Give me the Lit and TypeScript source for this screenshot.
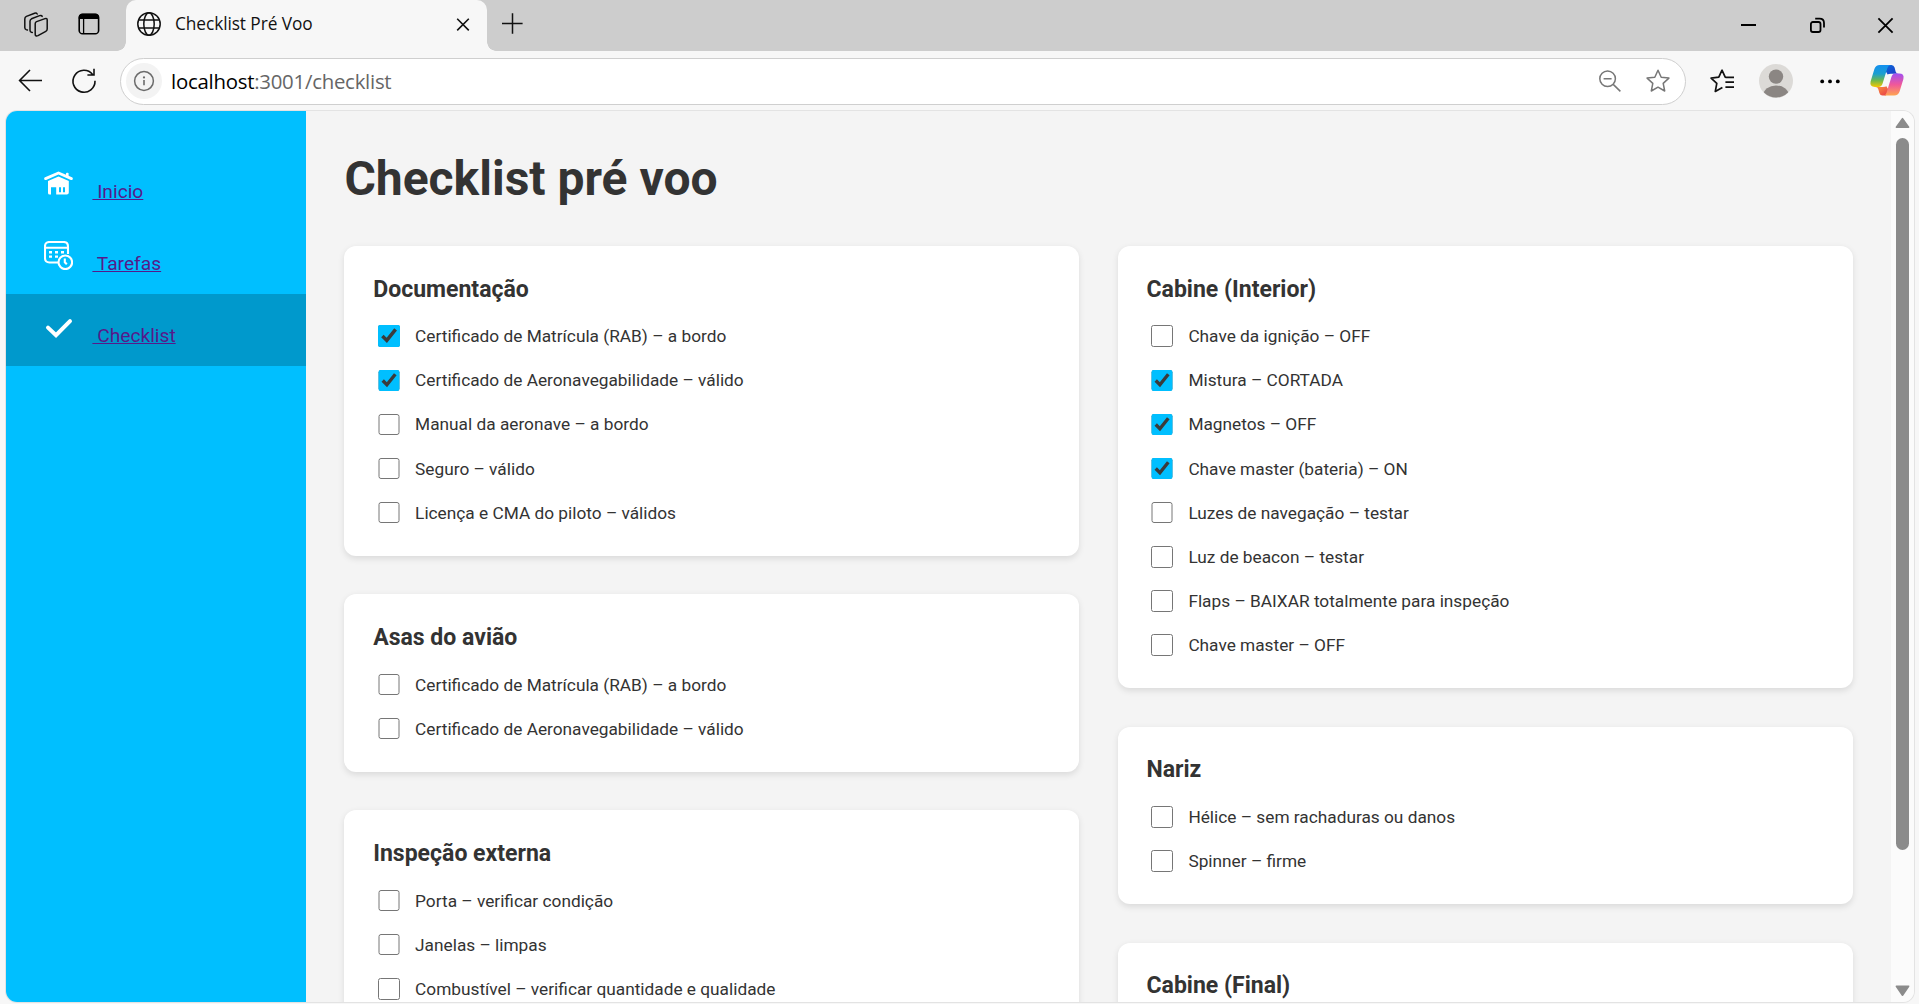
import { LitElement, html, css, svg } from "lit";
import { customElement, property } from "lit/decorators.js";

interface Item {
  label: string;
  done?: boolean;
}
interface Section {
  title: string;
  items: Item[];
}

const LEFT: Section[] = [
  {
    title: "Documentação",
    items: [
      { label: "Certificado de Matrícula (RAB) – a bordo", done: true },
      { label: "Certificado de Aeronavegabilidade – válido", done: true },
      { label: "Manual da aeronave – a bordo" },
      { label: "Seguro – válido" },
      { label: "Licença e CMA do piloto – válidos" },
    ],
  },
  {
    title: "Asas do avião",
    items: [
      { label: "Certificado de Matrícula (RAB) – a bordo" },
      { label: "Certificado de Aeronavegabilidade – válido" },
    ],
  },
  {
    title: "Inspeção externa",
    items: [
      { label: "Porta – verificar condição" },
      { label: "Janelas – limpas" },
      { label: "Combustível – verificar quantidade e qualidade" },
    ],
  },
];

const RIGHT: Section[] = [
  {
    title: "Cabine (Interior)",
    items: [
      { label: "Chave da ignição – OFF" },
      { label: "Mistura – CORTADA", done: true },
      { label: "Magnetos – OFF", done: true },
      { label: "Chave master (bateria) – ON", done: true },
      { label: "Luzes de navegação – testar" },
      { label: "Luz de beacon – testar" },
      { label: "Flaps – BAIXAR totalmente para inspeção" },
      { label: "Chave master – OFF" },
    ],
  },
  {
    title: "Nariz",
    items: [{ label: "Hélice – sem rachaduras ou danos" }, { label: "Spinner – firme" }],
  },
  { title: "Cabine (Final)", items: [] },
];

@customElement("check-card")
export class CheckCard extends LitElement {
  @property({ attribute: false }) section!: Section;

  static styles = css`
    :host {
      display: block;
      background: #fff;
      border-radius: 12px;
      padding: 28.8px 28.8px 28.4px;
      box-shadow: 0 2.4px 6px rgba(0, 0, 0, 0.1);
    }
    .title {
      margin: 0;
      height: 46.59px;
      box-sizing: border-box;
      padding-top: 1px;
      font-size: 23.04px;
      font-weight: 700;
      line-height: 28px;
    }
    .list {
      display: flex;
      flex-direction: column;
      gap: 14.4px;
    }
    .row {
      display: flex;
      align-items: center;
      height: 29.72px;
      font-size: 17.28px;
    }
    .box {
      width: 21.6px;
      height: 21.6px;
      margin: 0 15.5px 0 4.8px;
      accent-color: #00bfff;
    }
  `;

  render() {
    return html`
      <h2 class="title">${this.section.title}</h2>
      <div class="list">
        ${this.section.items.map(
          (i) => html`<label class="row"
            ><input class="box" type="checkbox" .checked=${!!i.done} /><span>${i.label}</span></label
          >`
        )}
      </div>
    `;
  }
}

@customElement("side-nav")
export class SideNav extends LitElement {
  static styles = css`
    :host {
      display: flex;
      flex-direction: column;
      flex: 0 0 300px;
      padding-top: 39px;
      background: #00bfff;
      box-sizing: border-box;
    }
    .item {
      display: flex;
      height: 72px;
      box-sizing: border-box;
      padding: 19px 0 0 38px;
    }
    .active {
      background: #0099cc;
    }
    .icon {
      flex: none;
      width: 29px;
      height: 29px;
    }
    .link {
      margin: 9px 0 0 19.4px;
      font-size: 19.2px;
      line-height: 28px;
      color: #551a8b;
      text-decoration: underline;
      white-space: pre;
    }
  `;

  render() {
    return html`
      <div class="item">
        <svg class="icon" viewBox="0 0 29 29">
          <path d="M1.6 9.6 14.5 4 27.4 9.6" fill="none" stroke="#fff" stroke-width="2.8" stroke-linecap="round" stroke-linejoin="round"/>
          <rect x="22" y="3.8" width="2.6" height="4.5" rx="1" fill="#fff"/>
          <path fill-rule="evenodd" fill="#fff" d="M4 12 14.5 7.4 24.8 12V23.5Q24.8 25.6 22.8 25.6H12.2V18.2H7V25.6H5.6Q4 25.6 4 24ZM15 18.2V23.2H17V18.2ZM19 18.2V23.2H21V18.2Z"/>
        </svg>
        <a class="link" href="#"> Inicio</a>
      </div>
      <div class="item">
        <svg class="icon" viewBox="0 0 29 29" fill="none" stroke="#fff" stroke-width="2.1">
          <path d="M14 21.5H5.5Q1 21.5 1 17V5.5Q1 1 5.5 1H19.5Q24 1 24 5.5V13"/>
          <path d="M1 6.8H24"/>
          <path d="M5 11.2H8M11 11.2H14M17 11.2H20M5 15.6H8M11 15.6H14" stroke-width="2.4"/>
          <circle cx="21.3" cy="21.3" r="6.8"/>
          <path d="M20.8 17.5V21.2L22.8 23.2"/>
        </svg>
        <a class="link" href="#"> Tarefas</a>
      </div>
      <div class="item active">
        <svg class="icon" viewBox="0 0 29 29" fill="none" stroke="#fff" stroke-width="4" stroke-linecap="round">
          <path d="M4 14.6 12 22.1 26 8.1" stroke-linejoin="miter"/>
        </svg>
        <a class="link" href="#"> Checklist</a>
      </div>
    `;
  }
}

const star = "M12 1.2 15.2 8.2 22.9 9.1 17.2 14.4 18.7 22 12 18.2 5.3 22 6.8 14.4 1.1 9.1 8.8 8.2Z";
const globe = svg`<g fill="none" stroke="#111" stroke-width="1.5"><circle cx="12" cy="12" r="11.2"/><ellipse cx="12" cy="12" rx="5.2" ry="11.2"/><path d="M2 8H22M2 16H22"/></g>`;

@customElement("app-root")
export class AppRoot extends LitElement {
  static styles = css`
    :host {
      display: flex;
      flex-direction: column;
      width: 1919px;
      height: 1004px;
      overflow: hidden;
      background: #f7f7f7;
      color: #333;
      font-family: Roboto, "Liberation Sans", sans-serif;
    }
    svg {
      display: block;
      flex: none;
      overflow: visible;
    }
    .chrome {
      font-family: "Open Sans", "Noto Sans", sans-serif;
      color: #111;
    }
    .tabs {
      display: flex;
      height: 51px;
      background: #cdcdcd;
    }
    .cell {
      display: flex;
      flex: none;
      align-items: center;
      justify-content: center;
      height: 48px;
    }
    .w3 { width: 3px; }
    .w32 { width: 32px; }
    .w34 { width: 34px; }
    .w46 { width: 46px; }
    .w48 { width: 48px; }
    .w49 { width: 49px; }
    .w50 { width: 50px; }
    .w58 { width: 58px; }
    .w59 { width: 59px; }
    .w64 { width: 64px; }
    .w67 { width: 67px; }
    .w69 { width: 69px; }
    .w72 { width: 72px; }
    .tab {
      display: flex;
      flex: none;
      width: 379px;
      height: 51px;
      padding: 0 9px;
      margin-left: 11px;
      box-sizing: border-box;
      background:
        radial-gradient(circle at 0 0, #cdcdcd 8.5px, #f7f7f7 9px) left bottom / 9px 9px no-repeat,
        radial-gradient(circle at 100% 0, #cdcdcd 8.5px, #f7f7f7 9px) right bottom / 9px 9px no-repeat;
    }
    .face {
      display: flex;
      flex: none;
      width: 361px;
      height: 51px;
      border-radius: 10px 10px 0 0;
      background: #f7f7f7;
    }
    .tabtitle {
      flex: 1;
      margin-left: 3px;
      font-size: 17.3px;
      line-height: 47px;
      letter-spacing: -0.08px;
      white-space: nowrap;
    }
    .grow {
      flex: 1;
    }
    .toolbar {
      display: flex;
      align-items: center;
      height: 59px;
    }
    .address {
      display: flex;
      flex: none;
      align-items: center;
      box-sizing: border-box;
      width: 1566px;
      height: 47px;
      border: 1px solid #cfcfcf;
      border-radius: 24px;
      background: #fff;
      padding-left: 5px;
      margin: 1px 0 0 12px;
    }
    .info {
      display: flex;
      align-items: center;
      justify-content: center;
      width: 36px;
      height: 36px;
      border-radius: 50%;
      background: #f3f3f3;
    }
    .url {
      flex: 1;
      margin-left: 9px;
      font-size: 20.4px;
      line-height: 44px;
      letter-spacing: -0.25px;
      color: #666;
    }
    .host {
      color: #000;
    }
    .window {
      display: flex;
      width: 1908px;
      height: 891px;
      margin: 1px 0 0 6px;
      overflow: hidden;
      flex: none;
      border-radius: 11px;
      box-shadow: 0 0 0 1px #e3e3e3;
      background: #f4f4f4;
    }
    .page {
      display: flex;
      width: 1885px;
      overflow: hidden;
    }
    .main {
      flex: 1;
      padding: 39.4px 38.4px 0;
    }
    .heading {
      margin: 0 0 37.6px;
      font-size: 48px;
      font-weight: 700;
      line-height: 58px;
    }
    .columns {
      display: grid;
      grid-template-columns: 1fr 1fr;
      gap: 38.4px;
      align-items: start;
    }
    .column {
      display: flex;
      flex-direction: column;
      gap: 38.4px;
    }
    .scroll {
      display: flex;
      flex-direction: column;
      align-items: center;
      flex: 1;
      background: #fbfbfb;
    }
    .up {
      margin-top: 6px;
    }
    .thumb {
      width: 13px;
      height: 712px;
      margin-top: 10px;
      border-radius: 7px;
      background: #8b8b8b;
    }
    .down {
      margin-top: 135px;
    }
  `;

  private card(s: Section) {
    return html`<check-card .section=${s}></check-card>`;
  }

  render() {
    return html`
      <div class="tabs chrome">
        <div class="cell w72">
          <svg width="24" height="25" viewBox="0 0 24 25" fill="none" stroke="#111" stroke-width="1.5" stroke-linejoin="round" stroke-linecap="round">
            <path d="M12.6 9.6 21 6.6Q23.2 6 23.2 8V17Q23.2 18.7 21.8 19.4L14 23.6Q11.2 24.6 11.2 22.2V11.8Q11.2 10.2 12.6 9.6Z"/>
            <path d="M8.3 20.4 7.4 20.2Q6 19.8 6 18.2V9.2Q6 7.6 7.5 6.8L15.6 3.6Q17.6 3 18.2 4.4"/>
            <path d="M3.4 18 2.2 17.6Q.8 17 .8 15.4V7Q.8 5.2 2.4 4.4L10.6 1.2Q12.4.6 13.2 2"/>
          </svg>
        </div>
        <div class="cell w34">
          <svg width="22" height="22" viewBox="0 0 22 22">
            <rect x="1.2" y="1.2" width="19.4" height="19.6" rx="3.4" fill="none" stroke="#000" stroke-width="1.6"/>
            <path d="M.8 6V4.4Q.8.8 4.4.8H17.6Q21 .8 21 4.4V6Z"/>
            <path d="M5.6 6V21" stroke="#000" stroke-width="1.3"/>
          </svg>
        </div>
        <div class="tab">
          <div class="face">
            <div class="cell w46"><svg width="24" height="24" viewBox="0 0 24 24">${globe}</svg></div>
            <div class="tabtitle">Checklist Pré Voo</div>
            <div class="cell w49">
              <svg width="12" height="12" viewBox="0 0 12 12"><path d="M.2.8 11.8 12.4M11.8.8.2 12.4" stroke="#111" stroke-width="1.6"/></svg>
            </div>
          </div>
        </div>
        <div class="cell w32">
          <svg width="20" height="20" viewBox="0 0 20 20"><path d="M0 9.5H20.6M10.5-.8V19.8" stroke="#111" stroke-width="1.5"/></svg>
        </div>
        <div class="grow"></div>
        <div class="cell w69"><svg width="15" height="4" viewBox="0 0 15 4"><path d="M0 3H15" stroke="#000" stroke-width="2"/></svg></div>
        <div class="cell w69">
          <svg width="15" height="15" viewBox="0 0 15 15" fill="none" stroke="#000" stroke-width="1.8">
            <rect x=".9" y="5" width="9.6" height="10" rx="2"/>
            <path d="M5.2 1.6H9.6Q14 1.6 14 6V10.4"/>
          </svg>
        </div>
        <div class="cell w67"><svg width="15" height="15" viewBox="0 0 15 15"><path d="M.4 1.4 14.6 15.6M14.6 1.4.4 15.6" stroke="#000" stroke-width="1.8"/></svg></div>
      </div>

      <div class="toolbar chrome">
        <div class="cell w59">
          <svg width="24" height="22" viewBox="0 0 24 22" fill="none" stroke="#111" stroke-width="1.6"><path d="M12 0 1.6 10.5 12 21M1.6 10.5H24"/></svg>
        </div>
        <div class="cell w49">
          <svg width="24" height="25" viewBox="0 0 24 25" fill="none" stroke="#111" stroke-width="1.6"><path d="M23 12.8A11 11 0 1 1 20.6 6.4M22 .8V7H15.4"/></svg>
        </div>
        <div class="address">
          <div class="info">
            <svg width="20" height="20" viewBox="0 0 20 20"><circle cx="10" cy="10" r="9.4" fill="none" stroke="#6b6b6b" stroke-width="1.5"/><path d="M10 9V14.2" stroke="#6b6b6b" stroke-width="1.6"/><circle cx="10" cy="6.4" r="1.1" fill="#6b6b6b"/></svg>
          </div>
          <div class="url"><span class="host">localhost</span>:3001/checklist</div>
          <div class="cell w48">
            <svg width="22" height="22" viewBox="0 0 22 22" fill="none" stroke="#777" stroke-width="1.5"><circle cx="8.6" cy="8.8" r="7.8"/><path d="M14.2 14.4 21.4 21.4M4.6 8.8H12.6"/></svg>
          </div>
          <div class="cell w48">
            <svg width="24" height="24" viewBox="0 0 24 24" fill="none" stroke="#777" stroke-width="1.5" stroke-linejoin="round"><path d=${star}/></svg>
          </div>
          <div class="cell w3"></div>
        </div>
        <div class="grow"></div>
        <div class="cell w50">
          <svg width="24" height="24" viewBox="0 0 24 24" fill="none" stroke="#111" stroke-width="1.7" stroke-linejoin="round"><path d="M16 8.3 15.2 8.2 12 1.2 8.8 8.2 1.1 9.1 6.8 14.4 5.3 22.4 12.4 18.6M15.4 8.4H24M15.4 13.2H24M15.4 18.2H24"/></svg>
        </div>
        <div class="cell w58">
          <svg width="34" height="34" viewBox="0 0 34 34">
            <defs><clipPath id="av"><circle cx="17" cy="17" r="16.6"/></clipPath></defs>
            <circle cx="17" cy="17" r="17" fill="#dcdad7"/>
            <g clip-path="url(#av)" fill="#8b8683"><circle cx="17" cy="12.6" r="7.2"/><ellipse cx="17" cy="30.5" rx="12.6" ry="9"/></g>
          </svg>
        </div>
        <div class="cell w50">
          <svg width="20" height="4" viewBox="0 0 20 4"><circle cx="2.2" cy="2.4" r="1.9"/><circle cx="10" cy="2.4" r="1.9"/><circle cx="17.8" cy="2.4" r="1.9"/></svg>
        </div>
        <div class="cell w64">
          <svg width="34" height="31" viewBox="0 0 34 31">
            <defs>
              <linearGradient id="ca" x1="0" y1="0" x2="0" y2="1"><stop offset="0" stop-color="#1390f0"/><stop offset=".4" stop-color="#1c9fd0"/><stop offset=".7" stop-color="#6db84e"/><stop offset="1" stop-color="#f5c800"/></linearGradient>
              <linearGradient id="cb" x1="0" y1="0" x2="0" y2="1"><stop offset="0" stop-color="#a24ff0"/><stop offset=".5" stop-color="#f0589a"/><stop offset="1" stop-color="#ffa650"/></linearGradient>
              <linearGradient id="cc" x1="0" y1="0" x2="1" y2="1"><stop offset="0" stop-color="#0a6ad8"/><stop offset="1" stop-color="#2238c8"/></linearGradient>
              <linearGradient id="cd" x1="0" y1="0" x2="1" y2="1"><stop offset="0" stop-color="#fb9a3c"/><stop offset="1" stop-color="#e8384a"/></linearGradient>
            </defs>
            <path fill="url(#cc)" d="M18 0H21.5Q23.8 0 24.6 2.6L25.6 6.4Q26.2 8.6 28.6 8.8H21Q18.4 8.8 17.6 9.4L15.6 6Z"/>
            <path fill="url(#cd)" d="M16 30.6H12.4Q10.2 30.6 9.4 28L8.4 24.4Q7.8 22 5.2 22H12.8Q15.6 22 16.4 21.2L18.6 25Z"/>
            <path fill="url(#ca)" d="M9.8 0H21.5Q18.4 0 17.4 3L12.6 18.6Q11.6 22 8.4 22H5Q-.6 22 .6 16.6L4.4 4Q5.8 0 9.8 0Z"/>
            <path fill="url(#cb)" d="M24.2 30.6H12.6Q15.6 30.6 16.6 27.4L21.4 12Q22.4 8.6 25.6 8.6H29Q34.6 8.6 33.4 14L29.6 26.6Q28.2 30.6 24.2 30.6Z"/>
          </svg>
        </div>
      </div>

      <div class="window">
        <div class="page">
          <side-nav></side-nav>
          <div class="main">
            <h1 class="heading">Checklist pré voo</h1>
            <div class="columns">
              <div class="column">${LEFT.map((s) => this.card(s))}</div>
              <div class="column">${RIGHT.map((s) => this.card(s))}</div>
            </div>
          </div>
        </div>
        <div class="scroll">
          <svg class="up" width="15" height="11" viewBox="0 0 15 11"><path d="M1.4 10.2 7.5 1.6 13.6 10.2Z" fill="#8b8b8b" stroke="#8b8b8b" stroke-width="1.6" stroke-linejoin="round"/></svg>
          <div class="thumb"></div>
          <svg class="down" width="15" height="12" viewBox="0 0 15 12"><path d="M1.4 1.2 7.5 10.2 13.6 1.2Z" fill="#8b8b8b" stroke="#8b8b8b" stroke-width="1.6" stroke-linejoin="round"/></svg>
        </div>
      </div>
    `;
  }
}
